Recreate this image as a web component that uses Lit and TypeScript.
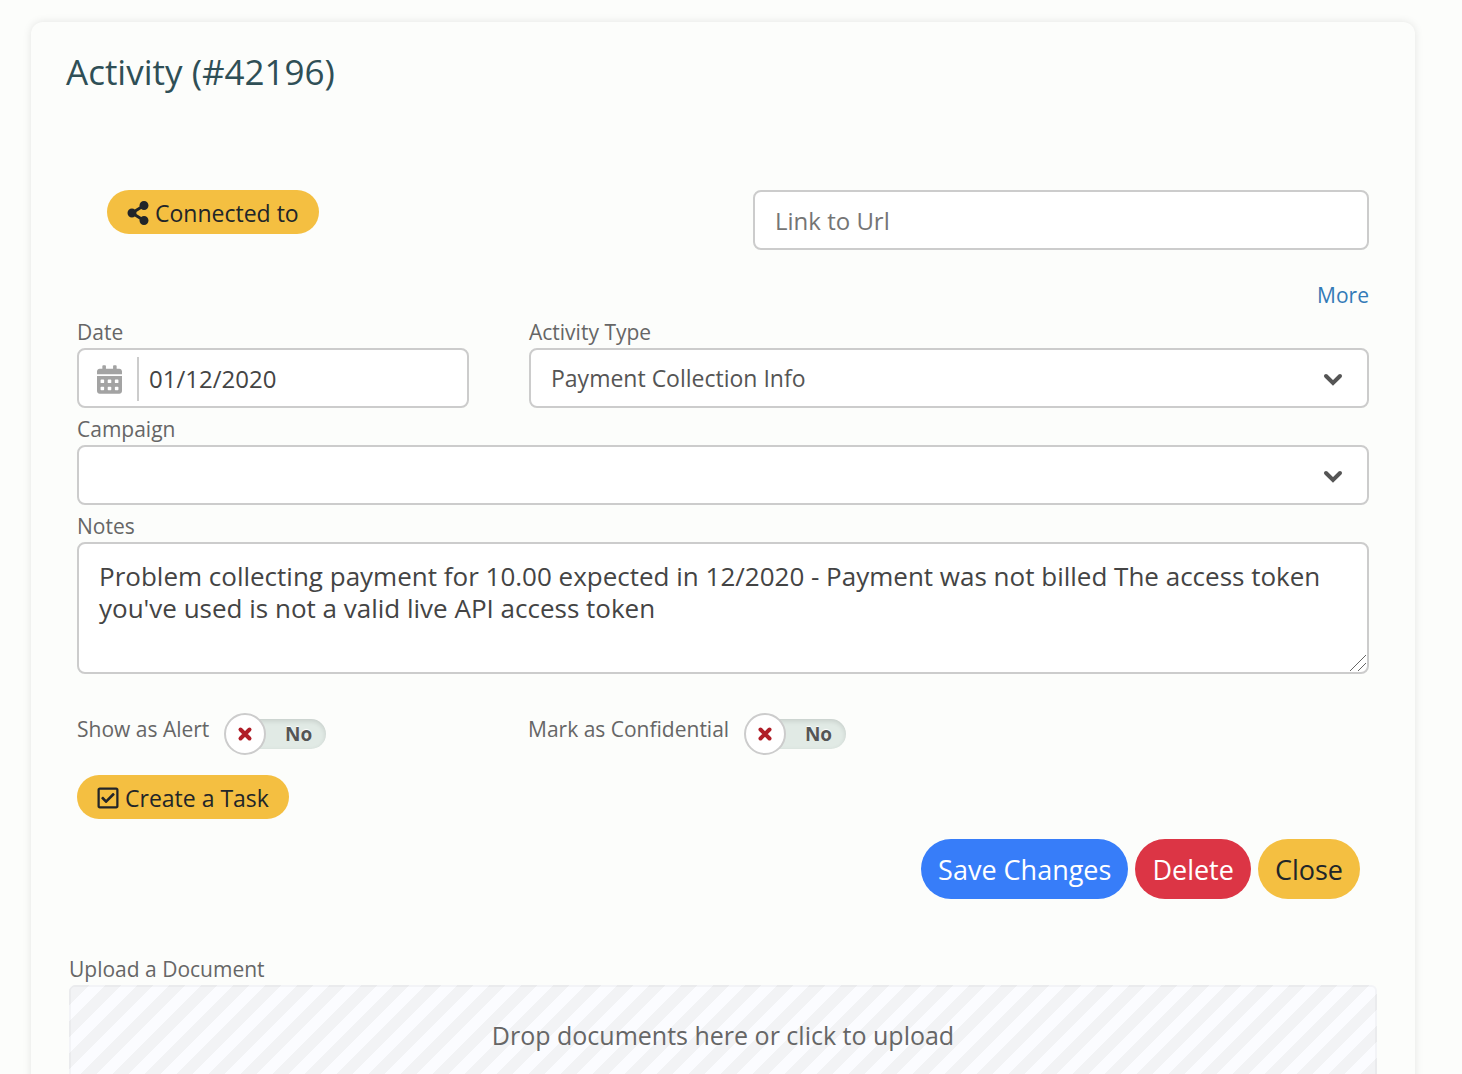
import { LitElement, html, css, svg } from "lit";
import { customElement, property, state } from "lit/decorators.js";

const shareIcon = svg`<path d="M352 320c-22.600 0-43.400 7.800-59.800 20.900l-102.500-64.100a96.600 96.600 0 0 0 0-41.700l102.500-64.100C308.600 184.200 329.400 192 352 192c53 0 96-43 96-96S405 0 352 0s-96 43-96 96c0 7.200.8 14.100 2.300 20.800L155.800 180.900C139.400 167.800 118.600 160 96 160c-53 0-96 43-96 96s43 96 96 96c22.600 0 43.400-7.800 59.800-20.900l102.500 64.100A96.300 96.300 0 0 0 256 416c0 53 43 96 96 96s96-43 96-96-43-96-96-96z"/>`;
const checkSquareIcon = svg`<path d="M400 32H48C21.500 32 0 53.500 0 80v352c0 26.500 21.500 48 48 48h352c26.500 0 48-21.500 48-48V80c0-26.500-21.500-48-48-48zm0 400H48V80h352v352zm-35.900-241.500L191.500 361.700c-4.700 4.700-12.300 4.600-17-.1l-90.800-91.500c-4.700-4.700-4.600-12.300.1-17l22.700-22.500c4.700-4.700 12.300-4.600 17 .1l59.800 60.300 141.400-140.200c4.700-4.700 12.300-4.600 17 .1l22.500 22.700c4.700 4.700 4.600 12.300-.1 17z"/>`;
const calendarIcon = svg`<path d="M0 464c0 26.500 21.500 48 48 48h352c26.500 0 48-21.500 48-48V192H0v272zm320-196c0-6.600 5.400-12 12-12h40c6.600 0 12 5.400 12 12v40c0 6.600-5.400 12-12 12h-40c-6.600 0-12-5.400-12-12v-40zm0 128c0-6.600 5.400-12 12-12h40c6.600 0 12 5.400 12 12v40c0 6.600-5.400 12-12 12h-40c-6.600 0-12-5.400-12-12v-40zM192 268c0-6.600 5.400-12 12-12h40c6.600 0 12 5.400 12 12v40c0 6.600-5.400 12-12 12h-40c-6.600 0-12-5.400-12-12v-40zm0 128c0-6.600 5.400-12 12-12h40c6.600 0 12 5.400 12 12v40c0 6.600-5.400 12-12 12h-40c-6.600 0-12-5.400-12-12v-40zM64 268c0-6.600 5.400-12 12-12h40c6.600 0 12 5.400 12 12v40c0 6.600-5.400 12-12 12H76c-6.600 0-12-5.400-12-12v-40zm0 128c0-6.600 5.400-12 12-12h40c6.600 0 12 5.400 12 12v40c0 6.600-5.400 12-12 12H76c-6.600 0-12-5.400-12-12v-40zM400 64h-48V16c0-8.800-7.200-16-16-16h-32c-8.800 0-16 7.200-16 16v48H160V16c0-8.800-7.200-16-16-16h-32c-8.800 0-16 7.200-16 16v48H48C21.500 64 0 85.500 0 112v48h448v-48c0-26.500-21.500-48-48-48z"/>`;

@customElement("toggle-switch")
export class ToggleSwitch extends LitElement {
  @property() label = "";
  @state() private on = false;

  static styles = css`
    :host { display: block; }
    .toggle {
      display: flex;
      align-items: flex-start;
      gap: 15px;
      cursor: pointer;
      color: #666;
      font-size: 21px;
      line-height: 32px;
    }
    .switch { position: relative; display: flex; align-items: center; }
    .knob {
      appearance: none;
      box-sizing: border-box;
      width: 42px;
      height: 42px;
      margin: 0;
      border: 2px solid #ccc;
      border-radius: 50%;
      background: #fff;
      z-index: 1;
      cursor: pointer;
    }
    .mark {
      position: absolute;
      z-index: 2;
      left: 13px;
      top: 13px;
      width: 16px;
      height: 16px;
      pointer-events: none;
    }
    .cross { fill: none; stroke: #b01e28; stroke-width: 4; stroke-linecap: round; }
    .tick { fill: none; stroke: #2a8a4a; stroke-width: 4; stroke-linecap: round; }
    .track {
      box-sizing: border-box;
      height: 30px;
      width: 82px;
      margin-left: -22px;
      padding-right: 14px;
      border-radius: 15px;
      background: #e1eae5;
      box-shadow: inset 0 2px 5px rgba(0, 0, 0, 0.12);
      color: #555;
      font-size: 19px;
      font-weight: 700;
      line-height: 30px;
      text-align: right;
      text-shadow: 0 -1px 1px #fff;
    }
  `;

  render() {
    return html`
      <label class="toggle">
        <span>${this.label}</span>
        <span class="switch">
          <input class="knob" type="checkbox" .checked=${this.on}
            @change=${(e: Event) => (this.on = (e.target as HTMLInputElement).checked)} />
          <svg class="mark" viewBox="0 0 16 16" aria-hidden="true">
            ${this.on
              ? svg`<path class="tick" d="M3 8l4 4 7-7"/>`
              : svg`<path class="cross" d="M3.500 3.500l9 9M12.500 3.500l-9 9"/>`}
          </svg>
          <span class="track">${this.on ? "Yes" : "No"}</span>
        </span>
      </label>
    `;
  }
}

@customElement("app-root")
export class AppRoot extends LitElement {
  static styles = css`
    :host {
      display: block;
      box-sizing: border-box;
      min-height: 100vh;
      padding: 22px 47px 0 31px;
      overflow: hidden;
      background: #fcfdfb;
      font-family: "Open Sans", "Noto Sans", sans-serif;
      color: #666;
    }
    * { box-sizing: border-box; }
    .card {
      padding: 28px 38px 0;
      border-radius: 12px;
      background: #fcfdfb;
      box-shadow: 0 0 8px rgba(0, 0, 0, 0.1);
    }
    .title {
      margin: 0 0 96px -3px;
      color: #2f4f56;
      font-size: 35px;
      font-weight: 400;
      line-height: 44px;
    }
    .form { padding: 0 8px; }
    .top {
      display: flex;
      align-items: flex-start;
      justify-content: space-between;
      padding-left: 30px;
    }
    .btn {
      display: inline-flex;
      align-items: center;
      justify-content: center;
      border: 0;
      font-family: inherit;
      cursor: pointer;
    }
    .small {
      gap: 6px;
      height: 44px;
      padding: 2px 20px 0;
      border-radius: 22px;
      font-size: 23px;
    }
    .large {
      height: 60px;
      padding: 0 17px;
      border-radius: 30px;
      font-size: 27px;
    }
    .yellow { background: #f4bf41; color: #212529; }
    .blue { background: #377df9; color: #fff; }
    .red { background: #dc3545; color: #fff; }
    .icon { flex: none; width: 22px; height: 24px; fill: currentColor; }
    .field {
      display: block;
      width: 100%;
      height: 60px;
      margin: 0;
      padding: 0 20px;
      border: 2px solid #ccc;
      border-radius: 8px;
      background: #fff;
      color: #555;
      font-family: inherit;
      font-size: 24px;
    }
    .field::placeholder { color: #757575; opacity: 1; }
    .url { width: calc(50% - 15px); flex: none; }
    .more-row { display: flex; justify-content: flex-end; margin-top: 30px; }
    .more { color: #337ab7; font-size: 21px; line-height: 30px; text-decoration: none; }
    .label { display: block; padding-bottom: 2px; font-size: 21px; line-height: 28px; }
    .columns { display: grid; grid-template-columns: 391fr 841fr; column-gap: 60px; }
    .group { margin-top: 7px; }
    .more-row + .group { margin-top: 8px; }
    .date {
      display: flex;
      align-items: center;
      padding: 2px 0 0;
    }
    .calendar { flex: none; width: 25px; height: 29px; margin: 0 15px 0 18px; fill: #a3a3a3; }
    .date-input {
      flex: 1;
      min-width: 0;
      height: 44px;
      padding: 0 10px 2px;
      border: 0;
      border-left: 2px solid #ccc;
      background: none;
      color: #444;
      font: inherit;
    }
    .select-wrap { position: relative; }
    .select { appearance: none; padding-right: 60px; font-size: 23px; cursor: pointer; }
    .chevron {
      position: absolute;
      right: 26px;
      top: 25px;
      width: 20px;
      height: 13px;
      fill: none;
      stroke: #555;
      stroke-width: 4;
      stroke-linecap: round;
      pointer-events: none;
    }
    .notes {
      height: 132px;
      padding: 16px 20px;
      color: #444;
      font-size: 26px;
      line-height: 32px;
      resize: none;
    }
    .grip {
      position: absolute;
      right: 3px;
      bottom: 3px;
      width: 16px;
      height: 16px;
      stroke: #666;
      stroke-width: 1;
      pointer-events: none;
    }
    .toggles { margin: 39px 0 20px; }
    .actions {
      display: flex;
      justify-content: flex-end;
      gap: 7px;
      margin-top: 20px;
      padding-right: 9px;
    }
    .upload { margin-top: 56px; }
    .drop {
      display: block;
      width: 100%;
      height: 200px;
      padding: 32px 20px;
      border: 2px solid rgba(0, 0, 0, 0.03);
      border-radius: 6px;
      background-color: #fbfcff;
      background-image: linear-gradient(135deg, #f2f3f5 25%, transparent 25%, transparent 50%, #f2f3f5 50%, #f2f3f5 75%, transparent 75%);
      background-size: 32px 32px;
      color: #666;
      font-size: 25px;
      line-height: 32px;
      text-align: center;
      cursor: pointer;
    }
    .file { display: none; }
  `;

  private chevron() {
    return html`<svg class="chevron" viewBox="0 0 20 13" aria-hidden="true"><path d="M3 3l7 7 7-7"/></svg>`;
  }

  render() {
    return html`
      <main class="card">
        <h1 class="title">Activity (#42196)</h1>
        <form class="form" @submit=${(e: Event) => e.preventDefault()}>
          <div class="top">
            <button class="btn small yellow" type="button">
              <svg class="icon" viewBox="0 0 448 512" aria-hidden="true">${shareIcon}</svg>
              <span>Connected to</span>
            </button>
            <input class="field url" type="url" placeholder="Link to Url" aria-label="Link to Url" />
          </div>
          <div class="more-row"><a class="more" href="#more">More</a></div>

          <div class="group columns">
            <div>
              <label class="label" for="date">Date</label>
              <div class="field date">
                <svg class="calendar" viewBox="0 0 448 512" aria-hidden="true">${calendarIcon}</svg>
                <input class="date-input" id="date" type="text" .value=${"01/12/2020"} />
              </div>
            </div>
            <div>
              <label class="label" for="type">Activity Type</label>
              <div class="select-wrap">
                <select class="field select" id="type"><option>Payment Collection Info</option></select>
                ${this.chevron()}
              </div>
            </div>
          </div>

          <div class="group">
            <label class="label" for="campaign">Campaign</label>
            <div class="select-wrap">
              <select class="field select" id="campaign"><option></option></select>
              ${this.chevron()}
            </div>
          </div>

          <div class="group">
            <label class="label" for="notes">Notes</label>
            <div class="select-wrap">
              <textarea class="field notes" id="notes" .value=${"Problem collecting payment for 10.00 expected in 12/2020 - Payment was not billed The access token you've used is not a valid live API access token"}></textarea>
              <svg class="grip" viewBox="0 0 16 16" aria-hidden="true"><path d="M0 16L16 0M8 16l8-8"/></svg>
            </div>
          </div>

          <div class="toggles columns">
            <toggle-switch label="Show as Alert"></toggle-switch>
            <toggle-switch label="Mark as Confidential"></toggle-switch>
          </div>

          <button class="btn small yellow" type="button">
            <svg class="icon" viewBox="0 0 448 512" aria-hidden="true">${checkSquareIcon}</svg>
            <span>Create a Task</span>
          </button>

          <div class="actions">
            <button class="btn large blue" type="submit">Save Changes</button>
            <button class="btn large red" type="button">Delete</button>
            <button class="btn large yellow" type="button">Close</button>
          </div>
        </form>

        <section class="upload">
          <label class="label" for="file">Upload a Document</label>
          <label class="drop" for="file">Drop documents here or click to upload</label>
          <input class="file" id="file" type="file" multiple />
        </section>
      </main>
    `;
  }
}
